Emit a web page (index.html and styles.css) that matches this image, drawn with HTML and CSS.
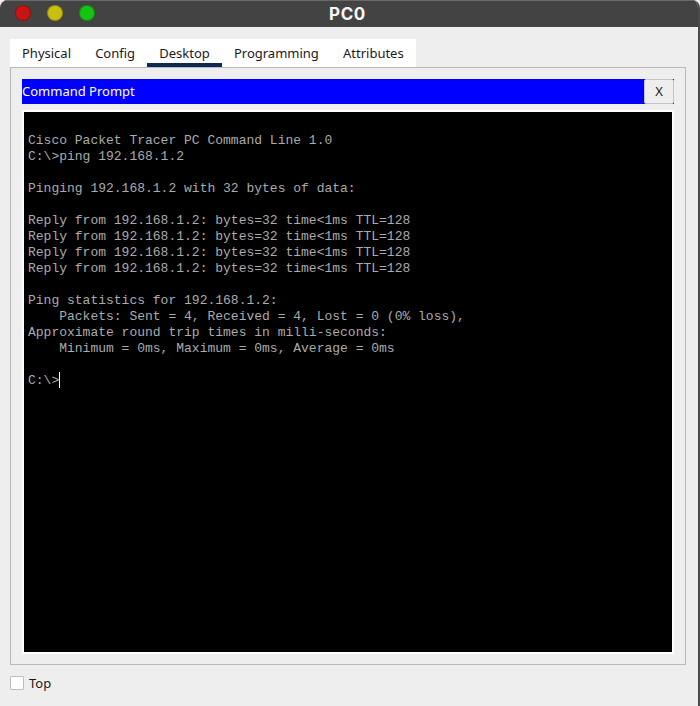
FILE: index.html
```html
<!DOCTYPE html>
<html lang="en">
<head>
<meta charset="utf-8">
<title>PC0</title>
<link rel="stylesheet" href="styles.css">
</head>
<body>
<div class="window">
  <header class="titlebar">
    <div class="lights">
      <span class="light red"></span>
      <span class="light yellow"></span>
      <span class="light green"></span>
    </div>
    <div class="title">PC0</div>
  </header>
  <main class="content">
    <nav class="tabs">
      <span class="tab">Physical</span>
      <span class="tab">Config</span>
      <span class="tab active">Desktop</span>
      <span class="tab">Programming</span>
      <span class="tab">Attributes</span>
    </nav>
    <section class="panel">
      <div class="appbar">
        <span class="apptitle">Command Prompt</span>
        <button class="close">X</button>
      </div>
      <div class="termframe">
<pre class="terminal">Cisco Packet Tracer PC Command Line 1.0
C:\&gt;ping 192.168.1.2

Pinging 192.168.1.2 with 32 bytes of data:

Reply from 192.168.1.2: bytes=32 time&lt;1ms TTL=128
Reply from 192.168.1.2: bytes=32 time&lt;1ms TTL=128
Reply from 192.168.1.2: bytes=32 time&lt;1ms TTL=128
Reply from 192.168.1.2: bytes=32 time&lt;1ms TTL=128

Ping statistics for 192.168.1.2:
    Packets: Sent = 4, Received = 4, Lost = 0 (0% loss),
Approximate round trip times in milli-seconds:
    Minimum = 0ms, Maximum = 0ms, Average = 0ms

C:\&gt;<span class="cursor"></span></pre>
      </div>
    </section>
    <label class="top"><span class="check"></span>Top</label>
  </main>
</div>
</body>
</html>
```
FILE: styles.css
```css
* { box-sizing: border-box; }
html, body { margin: 0; padding: 0; background: #eeeeee; }
body { width: 700px; height: 706px; overflow: hidden; font-family: "Noto Sans", sans-serif; font-size: 13px; color: #1a1a1a; }
.window { width: 700px; height: 706px; display: flex; flex-direction: column; border-right: 2px solid #4a4a4a; border-radius: 8px 8px 0 0; overflow: hidden; }
.titlebar { height: 27px; flex: none; background: #434343; border-top: 1px solid #6a6a6a; position: relative; display: flex; align-items: center; justify-content: center; }
.lights { position: absolute; left: 15px; top: 4px; display: flex; gap: 16px; }
.light { width: 16px; height: 16px; border-radius: 50%; border: 1px solid rgba(0,0,0,.25); }
.red { background: #c81414; }
.yellow { background: #c9bf10; }
.green { background: #14c314; }
.title { color: #f6f6f6; font-family: "Inter", sans-serif; font-weight: 700; font-size: 17px; line-height: 26px; letter-spacing: 0.6px; margin-left: -3px; }
.content { flex: 1; padding: 12px 0 0 10px; display: flex; flex-direction: column; }
.tabs { width: 406px; height: 28px; background: #fff; display: flex; flex: none; gap: 0.15px; }
.tab { padding: 0 12px; line-height: 28px; height: 28px; }
.tab.active { border-bottom: 4px solid #0f2a52; }
.panel { width: 676px; height: 598px; flex: none; border: 1px solid #b9b9b9; padding: 11px; }
.appbar { height: 25px; background: #0000ff; display: flex; justify-content: space-between; align-items: center; color: #fff; }
.apptitle { line-height: 27px; }
.close { width: 30px; height: 25px; padding: 0; background: #eeeeee; border: 1px solid #c4c4c4; border-radius: 2px; font: 13px/23px "Noto Sans", sans-serif; color: #1a1a1a; }
.termframe { margin-top: 6px; height: 544px; border: 2px solid #fff; background: #000; }
.terminal { margin: 0; height: 100%; padding: 21px 4px 4px; font-family: "Liberation Mono", monospace; font-size: 13px; line-height: 16px; color: #ababab; overflow: hidden; }
.cursor { display: inline-block; width: 1px; height: 16px; margin-top: -1px; background: #fff; vertical-align: top; }
.top { margin-top: 10px; height: 16px; display: flex; align-items: center; gap: 5px; }
.check { width: 14px; height: 14px; background: #fff; border: 1px solid #bdbdbd; border-radius: 1px; }
```
